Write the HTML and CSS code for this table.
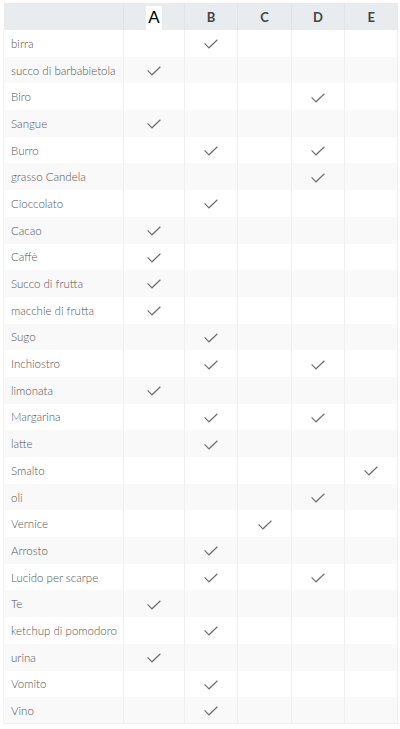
FILE: index.html
```html
<!DOCTYPE html>
<html>
<head>
<meta charset="utf-8">
<link rel="stylesheet" href="styles.css">
</head>
<body>
<svg width="0" height="0" class="defs">
  <defs>
    <symbol id="chk" viewBox="0 0 14 10">
      <polyline points="0.6,4.4 5,8.8 13.4,0.8" fill="none" stroke="#6f6f6f" stroke-width="1.2"/>
    </symbol>
  </defs>
</svg>
<table class="grid">
  <colgroup>
    <col class="c-label"><col class="c-a"><col class="c-b"><col class="c-c"><col class="c-d"><col class="c-e">
  </colgroup>
  <thead>
    <tr class="head">
      <th></th>
      <th><span class="hl">A</span></th>
      <th>B</th>
      <th>C</th>
      <th>D</th>
      <th>E</th>
    </tr>
  </thead>
  <tbody id="body"></tbody>
</table>
<script>
const rows = [
  ["birra","B"],["succo di barbabietola","A"],["Biro","D"],["Sangue","A"],["Burro","BD"],
  ["grasso Candela","D"],["Cioccolato","B"],["Cacao","A"],["Caffè","A"],["Succo di frutta","A"],
  ["macchie di frutta","A"],["Sugo","B"],["Inchiostro","BD"],["limonata","A"],["Margarina","BD"],
  ["latte","B"],["Smalto","E"],["oli","D"],["Vernice","C"],["Arrosto","B"],
  ["Lucido per scarpe","BD"],["Te","A"],["ketchup di pomodoro","B"],["urina","A"],["Vomito","B"],["Vino","B"]
];
const body = document.getElementById('body');
rows.forEach(([name, cols]) => {
  const tr = document.createElement('tr');
  const td = document.createElement('td');
  td.className = 'label';
  td.textContent = name;
  tr.appendChild(td);
  "ABCDE".split("").forEach(c => {
    const cell = document.createElement('td');
    cell.className = 'mark';
    if (cols.includes(c)) {
      cell.innerHTML = '<svg class="check" width="14" height="10"><use href="#chk"/></svg>';
    }
    tr.appendChild(cell);
  });
  body.appendChild(tr);
});
</script>
</body>
</html>
```
FILE: styles.css
```css
html, body {
  margin: 0;
  padding: 0;
  background: #ffffff;
}
body {
  padding: 3px 3px 0 3px;
}
.defs {
  position: absolute;
  width: 0;
  height: 0;
}
.grid {
  table-layout: fixed;
  border-collapse: collapse;
  width: 394px;
  font-family: Lato, "Open Sans", sans-serif;
}
.c-label { width: 120px; }
.c-a { width: 61px; }
.c-b { width: 53px; }
.c-c { width: 54px; }
.c-d { width: 53px; }
.c-e { width: 53px; }

.head {
  background: #e9ecef;
  height: 27px;
}
.head th {
  padding: 0;
  font-weight: 700;
  font-size: 13px;
  color: #444;
  text-align: center;
  vertical-align: middle;
  border-right: 1px solid #e1e4e7;
}
.head th:last-child {
  border-right: none;
}
.hl {
  display: inline-block;
  background: #ffffff;
  font-family: "Liberation Sans", Arial, sans-serif;
  font-weight: 400;
  font-size: 17px;
  color: #000;
  padding: 2px 2px;
  line-height: 20px;
  margin-top: 2px;
}
tbody tr {
  height: 26.69px;
}
tbody tr:nth-child(even) {
  background: #f9f9f9;
}
tbody td {
  padding: 0;
  border-right: 1px solid #efefef;
}
tbody td:first-child {
  border-left: 1px solid #f3f3f3;
}
tbody tr:last-child td {
  border-bottom: 1px solid #f0f0f0;
}
.label {
  font-size: 11.5px;
  font-weight: 300;
  color: #555;
  padding-left: 7px;
  white-space: nowrap;
}
.mark {
  text-align: center;
  vertical-align: middle;
}
.check {
  display: inline-block;
  vertical-align: middle;
  margin-top: -3px;
}
```
